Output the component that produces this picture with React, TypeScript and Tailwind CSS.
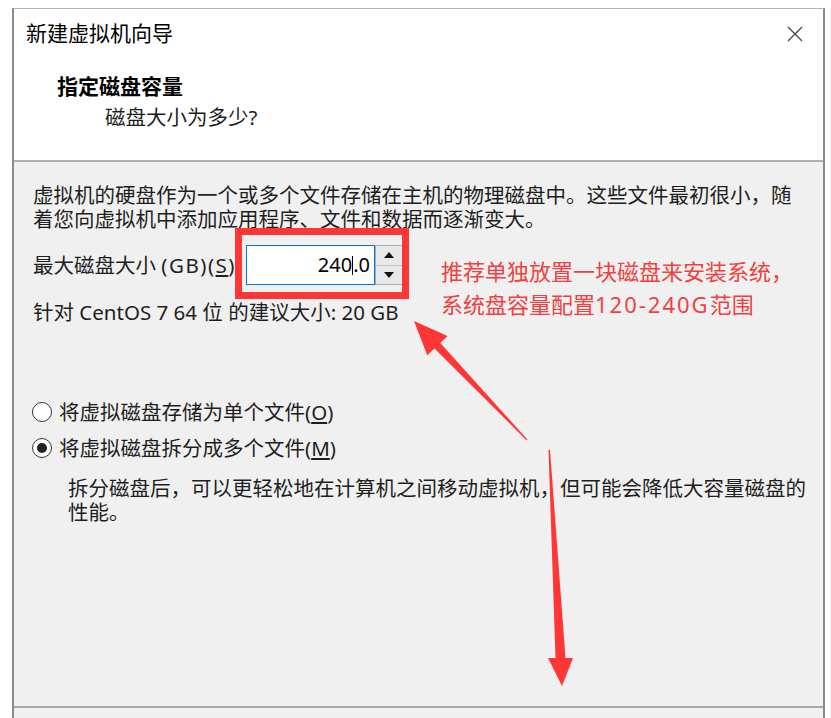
import React from "react";

const FONT = { fontFamily: '"Noto Sans", "Noto Sans CJK SC", sans-serif' };

function Radio({ checked }: { checked?: boolean }) {
  return (
    <span className="w-[20px] h-[20px] rounded-full border border-[#333] bg-white flex items-center justify-center shrink-0">
      {checked && <span className="w-[10px] h-[10px] rounded-full bg-[#222]" />}
    </span>
  );
}

function Spinner() {
  return (
    <div className="flex flex-col w-[28px] h-[40px] border border-[#adadad] bg-[#e8e8e8]">
      <div className="flex-1 flex items-center justify-center border-b border-[#c4c4c4]">
        <svg width="10" height="6" viewBox="0 0 10 6">
          <path d="M0 6 L5 0 L10 6 Z" fill="#111" />
        </svg>
      </div>
      <div className="flex-1 flex items-center justify-center">
        <svg width="10" height="6" viewBox="0 0 10 6">
          <path d="M0 0 L5 6 L10 0 Z" fill="#111" />
        </svg>
      </div>
    </div>
  );
}

export default function App() {
  return (
    <div className="relative w-[831px] h-[718px] bg-white overflow-hidden text-[#1e1e1e]" style={FONT}>
      <div className="ml-[12px] mt-[8px] w-[813px] h-[710px] border-t border-t-[#b4b4b4] border-l-2 border-r-2 border-l-[#8a8a8a] border-r-[#8a8a8a] flex flex-col">
        {/* header */}
        <div className="h-[151px] bg-white flex flex-col">
          <div className="h-[50px] flex items-center justify-between pl-[12px] pr-[20px]">
            <span className="text-[21px] text-black">新建虚拟机向导</span>
            <svg width="16" height="16" viewBox="0 0 16 16">
              <path d="M1 1 L15 15 M15 1 L1 15" stroke="#444" strokeWidth="1.3" />
            </svg>
          </div>
          <div className="mt-[13px] pl-[43px] text-[21px] leading-[28px] font-bold text-black">指定磁盘容量</div>
          <div className="mt-[3px] pl-[91px] text-[20.5px] leading-[28px]">磁盘大小为多少?</div>
        </div>
        <div className="h-[2px] bg-[#b0b0b0]" />

        {/* body */}
        <div className="h-[544px] bg-[#f0f0f0] flex flex-col">
          <div className="pt-[21px] pl-[19px] text-[20.5px] leading-[24px] whitespace-nowrap">
            <div>虚拟机的硬盘作为一个或多个文件存储在主机的物理磁盘中。这些文件最初很小，随</div>
            <div>着您向虚拟机中添加应用程序、文件和数据而逐渐变大。</div>
          </div>

          <div className="mt-[14px] pl-[19px] flex items-center h-[40px]">
            <span className="w-[213px] text-[20.5px] whitespace-nowrap">
              最大磁盘大小{" "}
              <span className="tracking-[1.5px]">
                (GB)(<span className="underline underline-offset-2">S</span>):
              </span>
            </span>
            <div className="flex">
              <div className="w-[129px] h-[40px] bg-white border border-[#0078d7] flex items-center justify-end pr-[4px] text-[20px] text-black">
                240<span className="inline-block w-[1px] h-[19px] bg-black" />.0
              </div>
              <Spinner />
            </div>
          </div>

          <div className="mt-[15px] pl-[19px] text-[20.5px] leading-[24px]">
            针对 CentOS 7 64 位 的建议大小: 20 GB
          </div>

          <div className="mt-[76px] pl-[18px] h-[24px] flex items-center gap-[7px] text-[20.5px]">
            <Radio />
            <span>
              将虚拟磁盘存储为单个文件(<span className="underline underline-offset-2">O</span>)
            </span>
          </div>
          <div className="mt-[12px] pl-[18px] h-[24px] flex items-center gap-[7px] text-[20.5px]">
            <Radio checked />
            <span>
              将虚拟磁盘拆分成多个文件(<span className="underline underline-offset-2">M</span>)
            </span>
          </div>
          <div className="mt-[16px] pl-[54px] text-[20.5px] leading-[24px] whitespace-nowrap">
            <div>拆分磁盘后，可以更轻松地在计算机之间移动虚拟机，但可能会降低大容量磁盘的</div>
            <div>性能。</div>
          </div>
        </div>
        <div className="h-[2px] bg-[#a8a8a8]" />
        <div className="flex-1 bg-[#f0f0f0]" />
      </div>

      {/* annotations */}
      <svg className="absolute left-0 top-0 pointer-events-none" width="831" height="718" viewBox="0 0 831 718">
        <rect x="238.5" y="231.5" width="167" height="64" fill="none" stroke="#ff3636" strokeWidth="7" />
        <polygon
          points="414,321 447.6,336.1 440.3,342.9 527.4,439.6 526.6,440.4 434.5,348.5 427.2,355.3"
          fill="#ff3636"
        />
        <polygon points="548.5,450 550,450 565.5,658 573,658 562,686 548,658 555.5,658" fill="#ff3636" />
      </svg>
      <div className="absolute left-[441px] top-[255px] text-[22px] leading-[33px] text-[#f04040] whitespace-nowrap">
        <div>推荐单独放置一块磁盘来安装系统，</div>
        <div>
          系统盘容量配置<span className="tracking-[2px]">120-240G</span>范围
        </div>
      </div>
    </div>
  );
}
